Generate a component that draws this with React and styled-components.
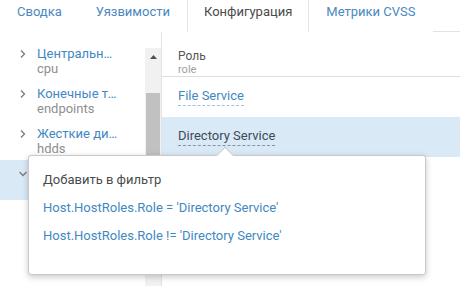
import React, { useEffect, useRef } from 'react'
import styled, { createGlobalStyle } from 'styled-components'

const GlobalStyle = createGlobalStyle`
  * {
    margin: 0;
    padding: 0;
    box-sizing: border-box;
  }
  body {
    background: #fff;
    font-family: Roboto, "Noto Sans", "Liberation Sans", sans-serif;
    font-size: 13px;
    color: #444;
    overflow: hidden;
  }
`

const Page = styled.div`
  position: relative;
  width: 460px;
  height: 286px;
  display: flex;
  flex-direction: column;
  overflow: hidden;
`

const TabBar = styled.div`
  height: 32px;
  display: flex;
  border-bottom: 1px solid #e3e3e3;
  flex-shrink: 0;
`

const Tab = styled.div`
  height: 32px;
  padding: 4px 16px 0;
  line-height: 15px;
  font-size: 13px;
  color: ${p => (p.$active ? '#4a4a4a' : '#4a88bf')};
  background: #fff;
  border-left: 1px solid ${p => (p.$active ? '#e3e3e3' : 'transparent')};
  border-right: 1px solid ${p => (p.$active ? '#e3e3e3' : 'transparent')};
  margin-bottom: ${p => (p.$active ? '-1px' : '0')};
  cursor: pointer;
`

const Body = styled.div`
  flex: 1;
  display: flex;
  min-height: 0;
`

const Sidebar = styled.div`
  width: 162px;
  flex-shrink: 0;
  border-right: 1px solid #e3e3e3;
  padding-top: 16px;
  display: flex;
`

const TreeScroll = styled.div`
  flex: 1;
  overflow: hidden;
`

const TreeList = styled.ul`
  list-style: none;
  padding-bottom: 200px;
`

const TreeRow = styled.li`
  height: 40px;
  display: flex;
  padding: 6px 0 0 19px;
  background: ${p => (p.$selected ? '#d9e9f6' : 'transparent')};
`

const Chevron = styled.span`
  width: 18px;
  height: 15px;
  display: flex;
  align-items: center;
  flex-shrink: 0;
`

const NodeText = styled.div`
  width: 83px;
  display: flex;
  flex-direction: column;
`

const NodeLabel = styled.span`
  line-height: 15px;
  color: #3f88c2;
  white-space: nowrap;
  overflow: hidden;
  text-overflow: ellipsis;
`

const NodeKey = styled.span`
  line-height: 15px;
  color: #8f8f8f;
`

const Scrollbar = styled.div`
  width: 16px;
  flex-shrink: 0;
  background: #f1f1f1;
  display: flex;
  flex-direction: column;
`

const ScrollButton = styled.div`
  height: 17px;
  display: flex;
  align-items: center;
  justify-content: center;
`

const ScrollThumb = styled.div`
  margin: 28px 1px 0;
  height: 148px;
  background: #c1c1c1;
`

const Content = styled.div`
  flex: 1;
  display: flex;
  flex-direction: column;
`

const ColumnHead = styled.div`
  height: 45px;
  padding: 17px 0 0 16px;
  border-bottom: 1px solid #dedede;
  display: flex;
  flex-direction: column;
`

const HeadTitle = styled.span`
  font-size: 12px;
  line-height: 14px;
  color: #555;
`

const HeadKey = styled.span`
  font-size: 11px;
  line-height: 13px;
  color: #a0a0a0;
`

const ValueRow = styled.div`
  height: 40px;
  padding-left: 16px;
  display: flex;
  align-items: center;
  background: ${p => (p.$selected ? '#d9e9f6' : 'transparent')};
`

const ValueLink = styled.span`
  display: inline-block;
  line-height: 15px;
  padding-bottom: 2px;
  font-size: 13px;
  color: ${p => (p.$selected ? '#3d4b5a' : '#3f88c2')};
  border-bottom: 1px dashed ${p => (p.$selected ? '#8593a3' : '#9cc2e0')};
  cursor: pointer;
`

const Popover = styled.div`
  position: absolute;
  left: 28px;
  top: 155px;
  width: 398px;
  height: 120px;
  background: #fff;
  border: 1px solid #c9c9c9;
  border-radius: 3px;
  box-shadow: 0 2px 6px rgba(0, 0, 0, 0.22);
  padding: 10px 14px 0;
`

const PopoverArrow = styled.div`
  position: absolute;
  left: 190px;
  top: -7px;
  width: 12px;
  height: 12px;
  background: #fff;
  border-top: 1px solid #c9c9c9;
  border-left: 1px solid #c9c9c9;
  transform: rotate(45deg);
`

const PopoverTitle = styled.div`
  line-height: 28px;
  font-size: 13px;
  color: #4a4a4a;
`

const FilterOption = styled.div`
  line-height: 28px;
  font-size: 13px;
  color: #3f88c2;
  cursor: pointer;
`

const tabs = ['Сводка', 'Уязвимости', 'Конфигурация', 'Метрики CVSS']

const nodes = [
  { label: 'Центральные процессоры', key: 'cpu' },
  { label: 'Конечные точки', key: 'endpoints' },
  { label: 'Жесткие диски', key: 'hdds' },
  { label: 'Роли хоста', key: 'hostroles', open: true },
]

const values = ['File Service', 'Directory Service']

const ChevronIcon = ({ open }) => (
  <svg width="8" height="8" viewBox="0 0 8 8">
    <path
      d={open ? 'M0.5 2 L4 5.5 L7.5 2' : 'M2 0.5 L5.5 4 L2 7.5'}
      fill="none"
      stroke="#7a7a7a"
      strokeWidth="1.3"
    />
  </svg>
)

const App = () => {
  const scrollRef = useRef(null)
  useEffect(() => {
    if (scrollRef.current) scrollRef.current.scrollTop = 8
  }, [])

  const selected = 'Directory Service'

  return (
    <Page>
      <GlobalStyle />
      <TabBar>
        {tabs.map(t => (
          <Tab key={t} $active={t === 'Конфигурация'}>{t}</Tab>
        ))}
      </TabBar>
      <Body>
        <Sidebar>
          <TreeScroll ref={scrollRef}>
            <TreeList>
              {nodes.map(n => (
                <TreeRow key={n.key} $selected={n.open}>
                  <Chevron><ChevronIcon open={n.open} /></Chevron>
                  <NodeText>
                    <NodeLabel>{n.label}</NodeLabel>
                    <NodeKey>{n.key}</NodeKey>
                  </NodeText>
                </TreeRow>
              ))}
            </TreeList>
          </TreeScroll>
          <Scrollbar>
            <ScrollButton>
              <svg width="7" height="4" viewBox="0 0 7 4">
                <path d="M0 4 L3.5 0 L7 4 Z" fill="#505050" />
              </svg>
            </ScrollButton>
            <ScrollThumb />
          </Scrollbar>
        </Sidebar>
        <Content>
          <ColumnHead>
            <HeadTitle>Роль</HeadTitle>
            <HeadKey>role</HeadKey>
          </ColumnHead>
          {values.map(v => (
            <ValueRow key={v} $selected={v === selected}>
              <ValueLink $selected={v === selected}>{v}</ValueLink>
            </ValueRow>
          ))}
        </Content>
      </Body>
      <Popover>
        <PopoverArrow />
        <PopoverTitle>Добавить в фильтр</PopoverTitle>
        <FilterOption>Host.HostRoles.Role = '{selected}'</FilterOption>
        <FilterOption>Host.HostRoles.Role != '{selected}'</FilterOption>
      </Popover>
    </Page>
  )
}

export default App
